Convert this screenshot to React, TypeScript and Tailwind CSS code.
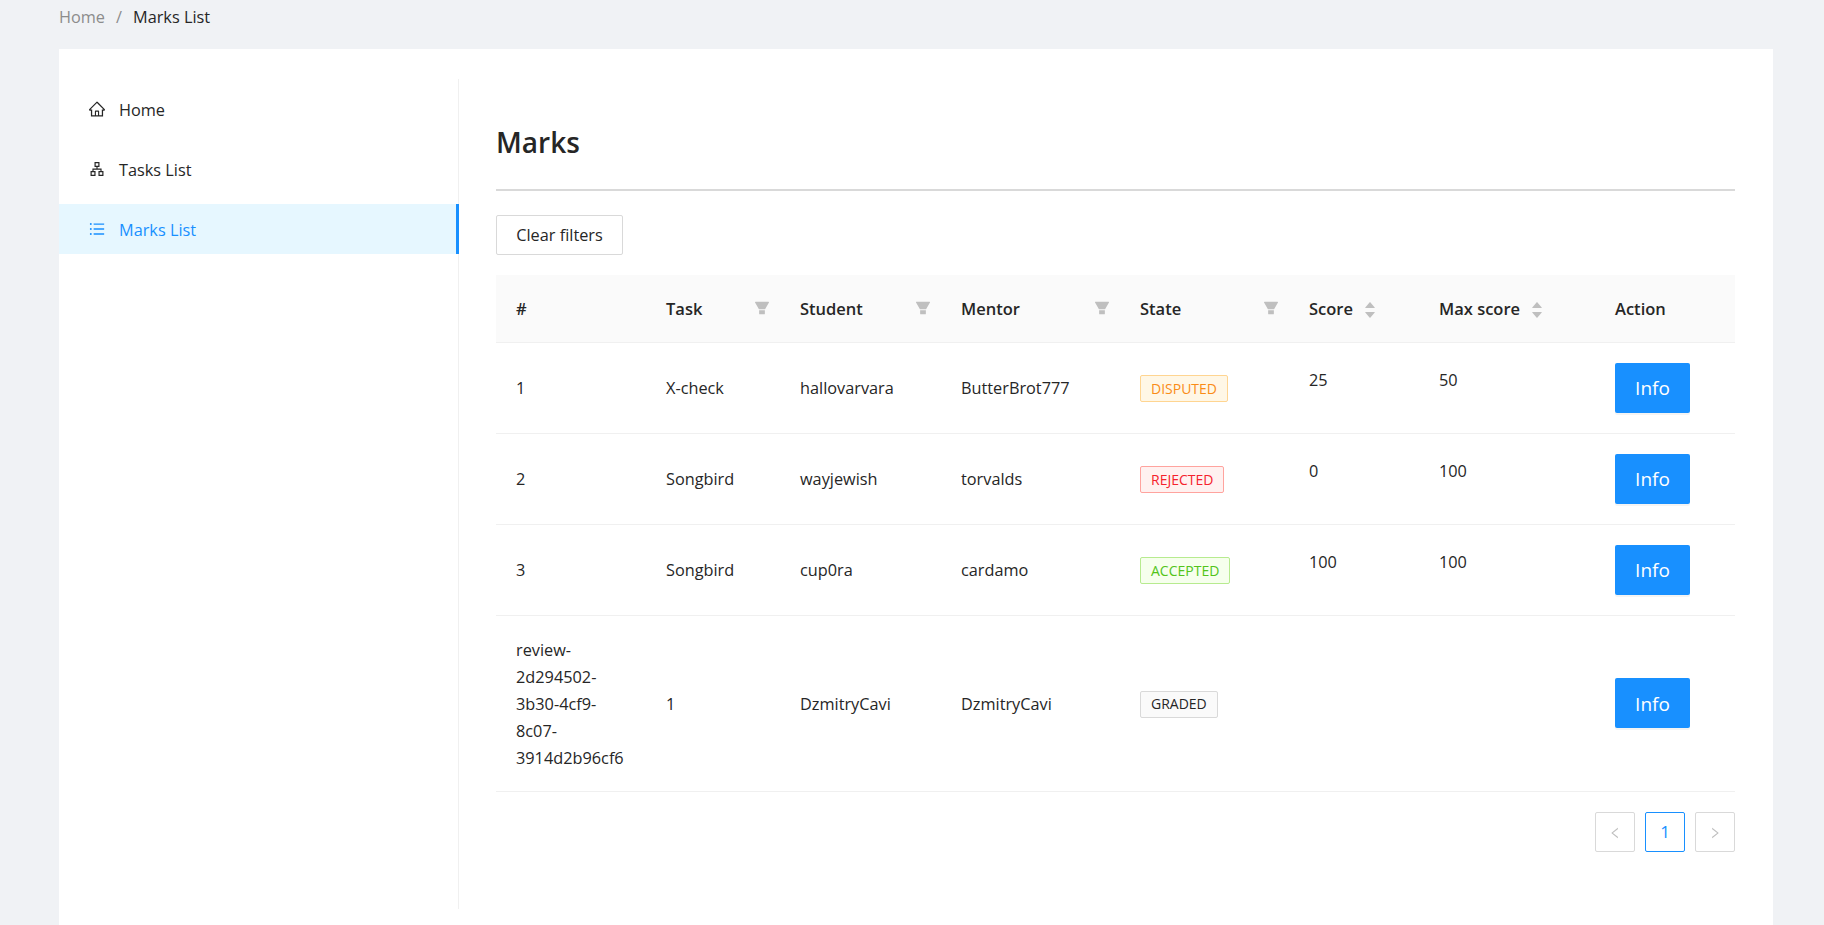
import React from "react";
import {
  AiOutlineHome,
  AiOutlinePartition,
  AiOutlineUnorderedList,
  AiFillFilter,
  AiFillCaretUp,
  AiFillCaretDown,
  AiOutlineLeft,
  AiOutlineRight,
} from "react-icons/ai";

function Filter() {
  return <AiFillFilter className="text-[18px] text-[#bfbfbf] -mt-[4px] -mr-[1px] shrink-0" />;
}

function Sort() {
  return (
    <span className="ml-[10px] inline-flex flex-col items-center text-[#bfbfbf] text-[14px] leading-none">
      <AiFillCaretUp className="-mb-[3px]" />
      <AiFillCaretDown className="-mt-[1px]" />
    </span>
  );
}

function Th({ children, filter, className = "" }: { children: React.ReactNode; filter?: boolean; className?: string }) {
  return (
    <th className={`p-0 pl-[20px] pt-[3px] font-semibold text-left text-[#262626] text-[16.5px] ${className}`}>
      <div className="flex items-center justify-between pr-[10px]">
        <span className="flex items-center">{children}</span>
        {filter ? <Filter /> : null}
      </div>
    </th>
  );
}

function Tag({ text, cls }: { text: string; cls: string }) {
  return (
    <span className={`inline-flex items-center h-[27px] px-[10px] rounded-[2px] border text-[14px] leading-none ${cls}`}>
      {text}
    </span>
  );
}

function InfoButton() {
  return (
    <button className="w-[75px] h-[50px] pt-[2px] rounded-[2px] bg-[#1890ff] text-white text-[19px] shadow-[0_2px_0_rgba(0,0,0,0.045)] block">
      Info
    </button>
  );
}

const rows = [
  { n: "1", task: "X-check", student: "hallovarvara", mentor: "ButterBrot777", state: "DISPUTED", cls: "bg-[#fff7e6] border-[#ffd591] text-[#fa8c16]", score: "25", max: "50" },
  { n: "2", task: "Songbird", student: "wayjewish", mentor: "torvalds", state: "REJECTED", cls: "bg-[#fff1f0] border-[#ffa39e] text-[#f5222d]", score: "0", max: "100" },
  { n: "3", task: "Songbird", student: "cup0ra", mentor: "cardamo", state: "ACCEPTED", cls: "bg-[#f6ffed] border-[#b7eb8f] text-[#52c41a]", score: "100", max: "100" },
];

export default function App() {
  return (
    <div className="min-h-[925px] h-[925px] overflow-hidden bg-[#f0f2f5] px-[59px] font-['Open_Sans',sans-serif] text-[16.3px] text-[#262626] flex flex-col">
      <div className="h-[49px] pb-[15px] flex items-center">
        <span className="text-[#8c8c8c]">Home</span>
        <span className="text-[#8c8c8c] mx-[11px]">/</span>
        <span>Marks List</span>
      </div>
      <div className="w-[1714px] flex-1 bg-white flex pt-[30px] pb-[16px]">
        <aside className="w-[400px] shrink-0 border-r border-[#f0f0f0] pt-[5px] flex flex-col gap-[10px]">
          <div className="h-[50px] flex items-center pl-[29px]">
            <AiOutlineHome className="text-[18px] mr-[13px]" />
            <span className="mt-[3px]">Home</span>
          </div>
          <div className="h-[50px] flex items-center pl-[29px]">
            <AiOutlinePartition className="text-[18px] mr-[13px] rotate-90" />
            <span className="mt-[3px]">Tasks List</span>
          </div>
          <div className="h-[50px] -mr-px flex items-center pl-[29px] bg-[#e6f7ff] text-[#1890ff] border-r-[3px] border-[#1890ff]">
            <AiOutlineUnorderedList className="text-[18px] mr-[13px]" />
            <span className="mt-[3px]">Marks List</span>
          </div>
        </aside>
        <main className="pl-[37px] w-[1276px]">
          <h1 className="h-[112px] w-[1239px] flex items-center text-[28px] font-semibold border-b-2 border-[#d9d9d9] m-0 pt-[16px]">
            Marks
          </h1>
          <button className="mt-[24px] w-[127px] h-[40px] pt-[1px] rounded-[2px] border border-[#d9d9d9] bg-white block">
            Clear filters
          </button>
          <table className="mt-[20px] w-[1239px] table-fixed border-collapse">
            <colgroup>
              <col className="w-[150px]" />
              <col className="w-[134px]" />
              <col className="w-[161px]" />
              <col className="w-[179px]" />
              <col className="w-[169px]" />
              <col className="w-[130px]" />
              <col className="w-[176px]" />
              <col className="w-[140px]" />
            </colgroup>
            <thead>
              <tr className="h-[67px] bg-[#fafafa] border-b border-[#f0f0f0]">
                <Th>#</Th>
                <Th filter>Task</Th>
                <Th filter>Student</Th>
                <Th filter>Mentor</Th>
                <Th filter>State</Th>
                <Th><span>Score</span><Sort /></Th>
                <Th><span>Max score</span><Sort /></Th>
                <Th>Action</Th>
              </tr>
            </thead>
            <tbody className="leading-[27px]">
              {rows.map((r) => (
                <tr key={r.n} className="h-[91px] border-b border-[#f0f0f0]">
                  <td className="pl-[20px] pt-[2px]">{r.n}</td>
                  <td className="pl-[20px] pt-[2px]">{r.task}</td>
                  <td className="pl-[20px] pt-[2px]">{r.student}</td>
                  <td className="pl-[20px] pt-[2px]">{r.mentor}</td>
                  <td className="pl-[20px] pt-[2px]"><Tag text={r.state} cls={r.cls} /></td>
                  <td className="pl-[20px] pt-[24px] align-top">{r.score}</td>
                  <td className="pl-[20px] pt-[24px] align-top">{r.max}</td>
                  <td className="pl-[20px]"><InfoButton /></td>
                </tr>
              ))}
              <tr className="h-[176px] border-b border-[#f0f0f0]">
                <td className="pl-[20px] pr-[10px] pt-[2px] break-words">
                  review-<br />2d294502-<br />3b30-4cf9-<br />8c07-<br />3914d2b96cf6
                </td>
                <td className="pl-[20px] pt-[2px]">1</td>
                <td className="pl-[20px] pt-[2px]">DzmitryCavi</td>
                <td className="pl-[20px] pt-[2px]">DzmitryCavi</td>
                <td className="pl-[20px] pt-[2px]"><Tag text="GRADED" cls="bg-[#fafafa] border-[#d9d9d9] text-[#262626]" /></td>
                <td className="pl-[20px]"></td>
                <td className="pl-[20px]"></td>
                <td className="pl-[20px]"><InfoButton /></td>
              </tr>
            </tbody>
          </table>
          <div className="w-[1239px] mt-[20px] flex justify-end gap-[10px]">
            <div className="w-[40px] h-[40px] rounded-[2px] border border-[#d9d9d9] flex items-center justify-center text-[#bfbfbf] text-[14px]"><AiOutlineLeft className="mt-[2px]" /></div>
            <div className="w-[40px] h-[40px] rounded-[2px] border border-[#1890ff] flex items-center justify-center text-[#1890ff] text-[17px]">1</div>
            <div className="w-[40px] h-[40px] rounded-[2px] border border-[#d9d9d9] flex items-center justify-center text-[#bfbfbf] text-[14px]"><AiOutlineRight className="mt-[2px]" /></div>
          </div>
        </main>
      </div>
    </div>
  );
}
